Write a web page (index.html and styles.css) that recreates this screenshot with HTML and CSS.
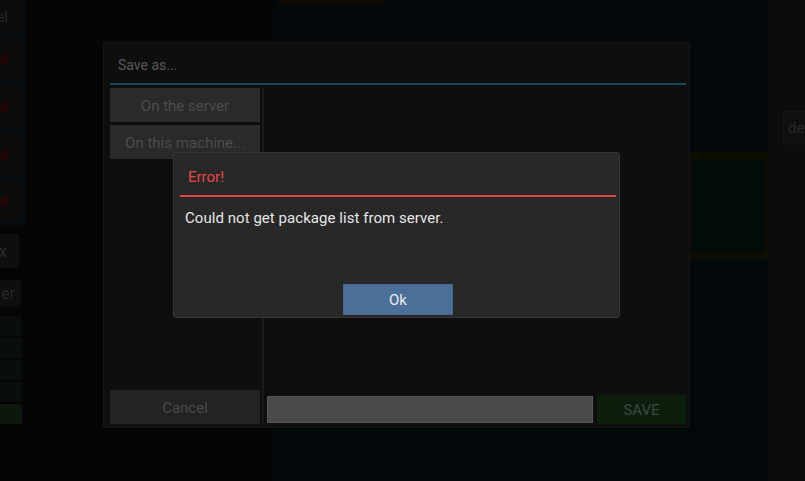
FILE: index.html
```html
<!DOCTYPE html>
<html>
<head>
<meta charset="utf-8">
<link rel="stylesheet" href="styles.css">
</head>
<body>
<div class="app">
  <aside class="side">
    <div class="list">
      <div class="item gray"><span>el</span></div>
      <div class="item red tall"><span>el</span></div>
      <div class="item red tall2"><span>el</span></div>
      <div class="item red tall2"><span>el</span></div>
      <div class="item red tall3"><span>el</span></div>
    </div>
    <div class="sbtn sbtn-x"><span>x</span></div>
    <div class="sbtn sbtn-er"><span>er</span></div>
    <div class="rows">
      <div class="row"></div>
      <div class="row"></div>
      <div class="row"></div>
      <div class="row"></div>
      <div class="row row-hi"></div>
    </div>
  </aside>
  <main class="stage">
    <div class="tab"></div>
    <div class="ybox"></div>
  </main>
  <div class="rail">
    <div class="rail-btn">de</div>
  </div>
</div>

<div class="modal save">
  <div class="save-head">Save as...</div>
  <div class="save-body">
    <div class="save-left">
      <div class="sv-btn">On the server</div>
      <div class="sv-btn">On this machine...</div>
      <div class="spacer"></div>
      <div class="sv-btn cancel">Cancel</div>
    </div>
    <div class="sep"></div>
    <div class="save-right">
      <div class="save-row">
        <div class="name-input"></div>
        <div class="save-btn">SAVE</div>
      </div>
    </div>
  </div>
</div>

<div class="modal err">
  <div class="err-title">Error!</div>
  <div class="err-msg">Could not get package list from server.</div>
  <div class="err-foot">
    <div class="ok-btn">Ok</div>
  </div>
</div>
</body>
</html>
```

FILE: styles.css
```css
* { box-sizing: border-box; }
html, body {
  margin: 0;
  padding: 0;
  width: 805px;
  height: 481px;
  overflow: hidden;
  background: #050505;
  font-family: Roboto, "Liberation Sans", sans-serif;
}
.app {
  display: flex;
  width: 805px;
  height: 481px;
}

/* left side (dimmed) */
.side {
  width: 271px;
  flex: none;
  background: #050505;
}
.list {
  width: 27px;
  height: 225px;
  background: #060b0f;
  padding: 0 5px 4px 0;
  display: flex;
  flex-direction: column;
  gap: 5px;
}
.item {
  height: 33px;
  background: #0b0b0b;
  display: flex;
  align-items: center;
  justify-content: flex-end;
  padding-right: 14px;
  white-space: nowrap;
  font-size: 15px;
}
.item.tall { height: 42px; }
.item.tall2 { height: 43px; }
.item.tall3 { height: 40px; }
.item.gray { color: #282828; }
.item.red { color: #3a0303; }
.sbtn {
  height: 34px;
  background: #0e0e0e;
  display: flex;
  align-items: center;
  justify-content: flex-end;
  white-space: nowrap;
  font-size: 16px;
  color: #282828;
}
.sbtn-x { width: 19px; margin-top: 9px; padding-right: 12px; }
.sbtn-er { width: 21px; height: 27px; margin-top: 12px; padding-right: 6px; }
.rows {
  margin-top: 9px;
  width: 22px;
  display: flex;
  flex-direction: column;
  gap: 2px;
}
.row { height: 20px; background: #0a0e0a; }
.row-hi { background: #0d180d; }

/* stage */
.stage {
  flex: 1;
  background: #02080a;
}
.tab {
  margin-left: 7px;
  width: 107px;
  height: 5px;
  background: #0e0c02;
  border-radius: 0 0 3px 3px;
}
.ybox {
  margin-top: 147px;
  margin-left: auto;
  width: 148px;
  height: 107px;
  background: #030b0a;
  border-top: 8px solid #0e0d02;
  border-bottom: 7px solid #0e0d02;
  border-right: 3px solid #0e0d02;
}

/* right rail */
.rail {
  width: 37px;
  flex: none;
  background: #0c0b0e;
  padding: 111px 0 0 15px;
  overflow: hidden;
}
.rail-btn {
  width: 40px;
  height: 34px;
  background: #0f0e11;
  border-top: 1px solid #141316;
  border-left: 1px solid #141316;
  color: #292929;
  font-size: 15px;
  line-height: 32px;
  padding-left: 4px;
  white-space: nowrap;
}

/* modals */
.modal { position: absolute; }

.save {
  left: 103px;
  top: 42px;
  width: 587px;
  height: 386px;
  background: #0e0e0e;
  border: 1px solid #141414;
  padding: 0 3px 3px 6px;
  display: flex;
  flex-direction: column;
}
.save-head {
  height: 42px;
  padding: 4px 0 0 8px;
  line-height: 36px;
  font-size: 14px;
  color: #595959;
  border-bottom: 2px solid #1a4757;
}
.save-body {
  flex: 1;
  margin-top: 3px;
  display: flex;
}
.save-left {
  width: 150px;
  flex: none;
  display: flex;
  flex-direction: column;
  gap: 3px;
}
.sv-btn {
  height: 34px;
  background: #2a2a2a;
  color: #4c4c4c;
  font-size: 15px;
  display: flex;
  align-items: center;
  justify-content: center;
  padding-top: 1px;
}
.sv-btn.cancel { background: #232323; color: #4a4a4a; }
.spacer { flex: 1; }
.sep {
  width: 2px;
  margin-left: 2px;
  background: #1b1b1b;
}
.save-right {
  flex: 1;
  margin-left: 3px;
  display: flex;
  flex-direction: column;
  justify-content: flex-end;
}
.save-row {
  display: flex;
  align-items: center;
  gap: 4px;
}
.name-input {
  width: 326px;
  height: 27px;
  background: #4a4a4a;
  border: 1px solid #565656;
}
.save-btn {
  width: 89px;
  height: 29px;
  background: #0c1f0c;
  color: #3d483d;
  font-size: 15px;
  display: flex;
  align-items: center;
  justify-content: center;
}

.err {
  left: 173px;
  top: 152px;
  width: 447px;
  height: 166px;
  background: #282828;
  border: 1px solid #363636;
  border-radius: 3px;
  padding: 0 3px 2px 6px;
  display: flex;
  flex-direction: column;
}
.err-title {
  padding: 14px 0 8px 8px;
  line-height: 20px;
  font-size: 15px;
  color: #e84646;
  border-bottom: 2px solid #e04545;
}
.err-msg {
  margin-top: 11px;
  padding-left: 5px;
  line-height: 20px;
  font-size: 15px;
  color: #e6e6e6;
  letter-spacing: 0.05px;
}
.err-foot {
  margin-top: auto;
  display: flex;
  justify-content: center;
}
.ok-btn {
  width: 110px;
  height: 31px;
  background: #4b6f98;
  border: 1px solid #44678e;
  color: #eaeaea;
  font-size: 15px;
  display: flex;
  align-items: center;
  justify-content: center;
}
```
